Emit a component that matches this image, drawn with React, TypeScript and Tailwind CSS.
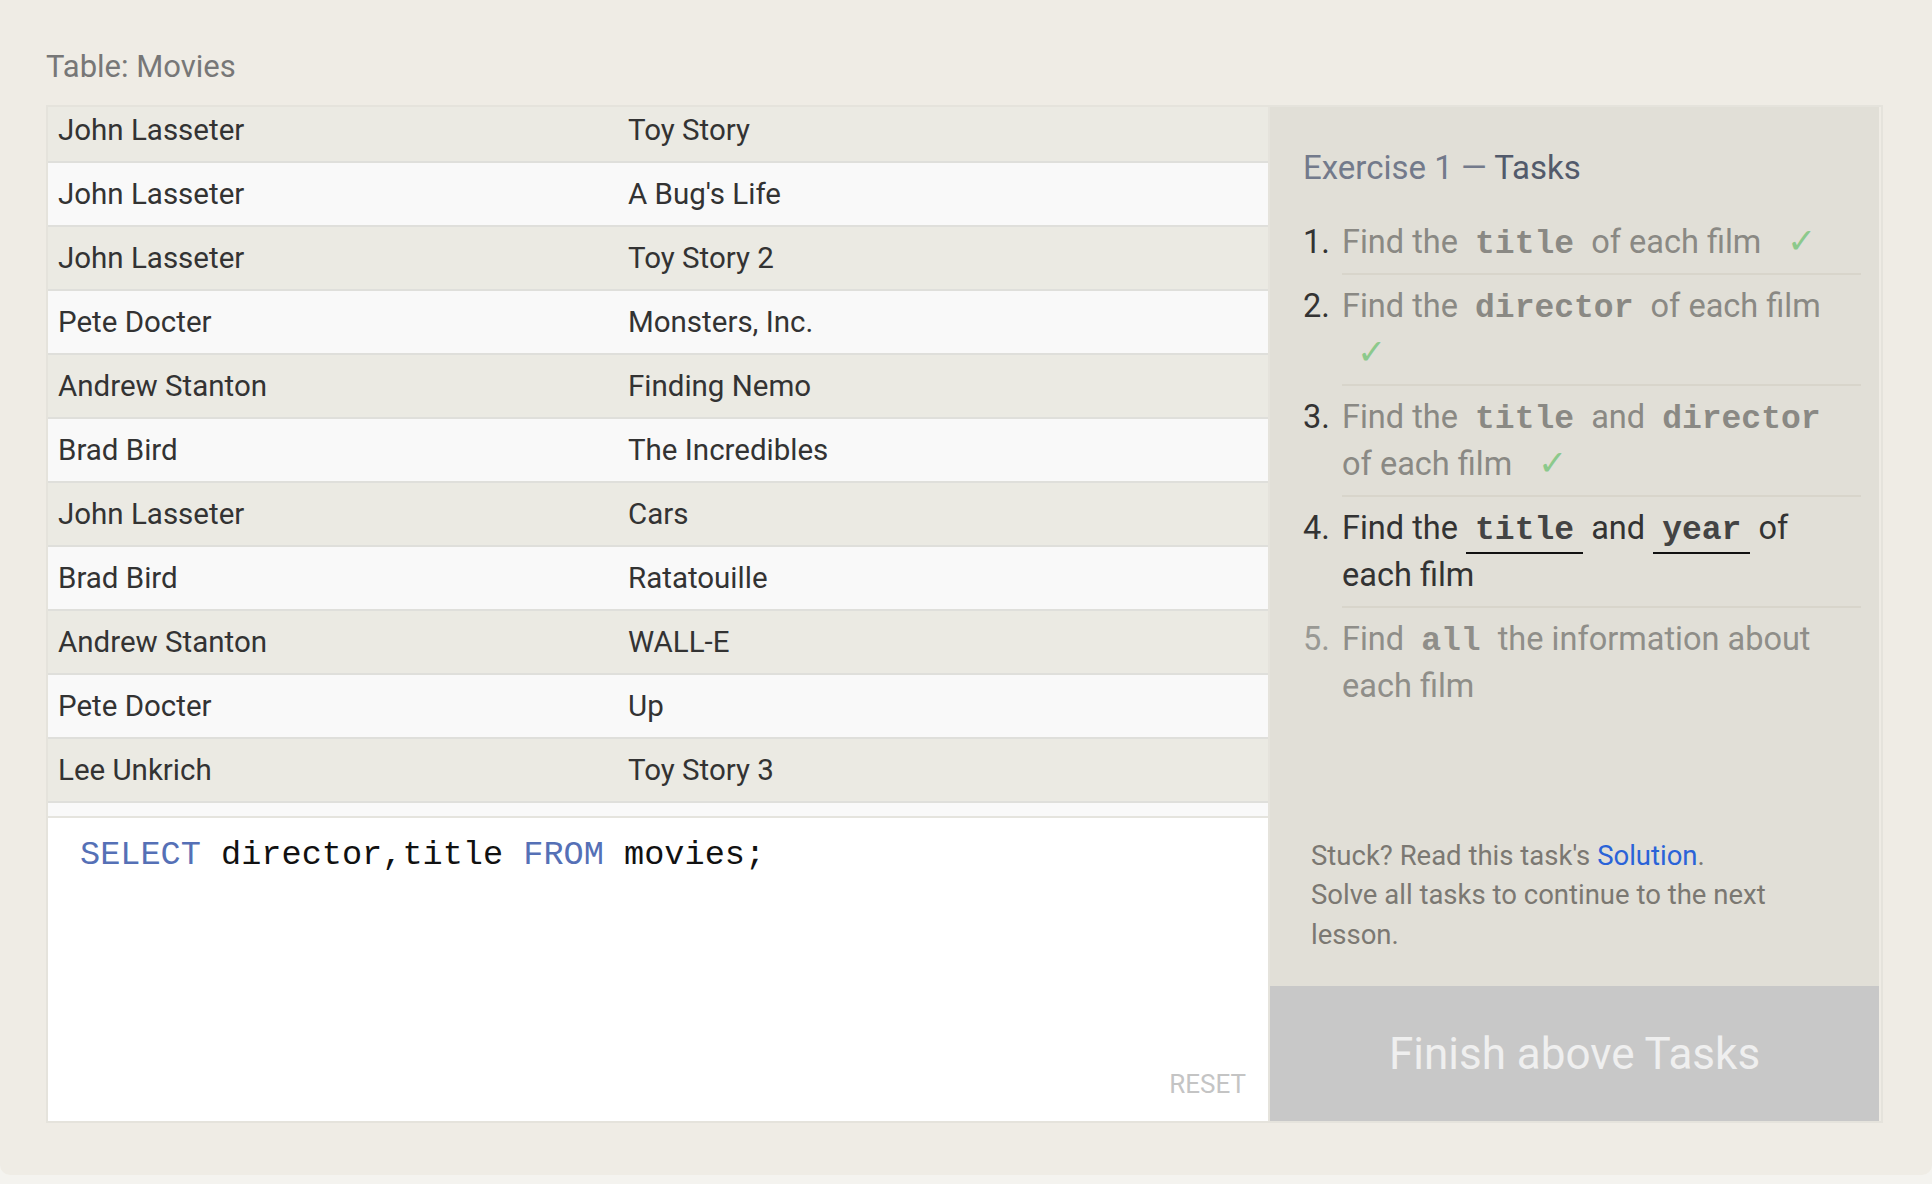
import React from "react";

const rows: [string, string][] = [
  ["John Lasseter", "Toy Story"],
  ["John Lasseter", "A Bug's Life"],
  ["John Lasseter", "Toy Story 2"],
  ["Pete Docter", "Monsters, Inc."],
  ["Andrew Stanton", "Finding Nemo"],
  ["Brad Bird", "The Incredibles"],
  ["John Lasseter", "Cars"],
  ["Brad Bird", "Ratatouille"],
  ["Andrew Stanton", "WALL-E"],
  ["Pete Docter", "Up"],
  ["Lee Unkrich", "Toy Story 3"],
  ["", ""],
];

function Code({ children, active }: { children: React.ReactNode; active?: boolean }) {
  return (
    <span
      className={
        "font-['Liberation_Mono',monospace] font-bold text-[33px] leading-none px-[9px] pb-[3px] " +
        (active ? "text-[#444444] border-b-2 border-[#111111]" : "")
      }
    >
      {children}
    </span>
  );
}

function Check({ inline }: { inline?: boolean }) {
  return (
    <span
      className={
        "inline-block text-[#8cc98c] text-[35px] leading-none " + (inline ? "pl-[26px]" : "pl-[15px]")
      }
    >
      ✓
    </span>
  );
}

function Task({
  n,
  children,
  numClass,
  textClass,
  last,
}: {
  n: number;
  children: React.ReactNode;
  numClass: string;
  textClass: string;
  last?: boolean;
}) {
  return (
    <li className="flex">
      <span className={"w-[39px] shrink-0 pt-[8px] leading-[47px] " + numClass}>{n}.</span>
      <div
        className={
          "flex-1 pt-[8px] pb-[7px] leading-[47px] " +
          textClass +
          (last ? "" : " border-b-2 border-[#d8d5cb]")
        }
      >
        {children}
      </div>
    </li>
  );
}

export default function App() {
  return (
    <div className="min-h-[1184px] bg-[#f4f3ef]">
      <div className="h-[1175px] rounded-b-[10px] bg-[#efece5] pl-[46px] pr-[49px] pt-[47px] font-[Roboto,sans-serif]">
        <h2 className="text-[31px] leading-[40px] text-[#777777] mb-[18px]">Table: Movies</h2>
        <div className="flex h-[1018px] border-2 border-[#e5e3dc]">
          {/* Left column */}
          <div className="w-[1220px] flex flex-col">
            <div className="h-[709px] overflow-hidden bg-[#f9f9f9]">
              <div className="-mt-[8px]">
                {rows.map((r, i) => (
                  <div
                    key={i}
                    className={
                      "flex h-[64px] items-center border-b-2 border-[#dfdfdb] text-[29.5px] text-[#333333] " +
                      (i % 2 === 0 ? "bg-[#ebeae3]" : "bg-[#f9f9f9]")
                    }
                  >
                    <div className="w-[580px] pl-[10px]">{r[0]}</div>
                    <div className="flex-1">{r[1]}</div>
                  </div>
                ))}
              </div>
            </div>
            <div className="flex-1 flex flex-col border-t-2 border-[#e5e4de] bg-white">
              <div className="pl-[32px] pt-[17px] leading-[40px] text-[33.6px] font-['Liberation_Mono',monospace] text-[#111111] whitespace-pre">
                <span className="text-[#5570b6]">SELECT</span> director,title <span className="text-[#5570b6]">FROM</span> movies;
              </div>
              <div className="flex-1" />
              <div className="self-end pr-[22px] pb-[21px] leading-[32px] text-[26px] text-[#c4c4c4]">RESET</div>
            </div>
          </div>

          {/* Right panel */}
          <div className="w-[611px] border-l-2 border-[#e5e3dc] flex flex-col bg-[#e1dfd7]">
            <div className="flex-1 flex flex-col justify-between pt-[41px]">
              <div>
                <h3 className="pl-[33px] text-[33px] leading-[40px] mb-[23px]">
                  <span className="text-[#737a8b]">Exercise 1 — </span>
                  <span className="text-[#525a6b]">Tasks</span>
                </h3>
                <ol className="pl-[33px] pr-[18px] text-[32.5px]">
                  <Task n={1} numClass="text-[#333333]" textClass="text-[#8a8984]">
                    Find the <Code>title</Code> of each film
                    <Check inline />
                  </Task>
                  <Task n={2} numClass="text-[#333333]" textClass="text-[#8a8984]">
                    Find the <Code>director</Code> of each film
                    <br />
                    <Check />
                  </Task>
                  <Task n={3} numClass="text-[#333333]" textClass="text-[#8a8984]">
                    Find the <Code>title</Code> and <Code>director</Code>
                    <br />
                    of each film
                    <Check inline />
                  </Task>
                  <Task n={4} numClass="text-[#333333]" textClass="text-[#333333]">
                    Find the <Code active>title</Code> and <Code active>year</Code> of
                    <br />
                    each film
                  </Task>
                  <Task n={5} numClass="text-[#999994]" textClass="text-[#8f8e89]" last>
                    Find <Code>all</Code> the information about
                    <br />
                    each film
                  </Task>
                </ol>
              </div>
              <div className="pl-[41px] pr-[20px] pb-[32px] text-[27.5px] leading-[39.5px] text-[#7b7872]">
                Stuck? Read this task's <span className="text-[#2a63d8]">Solution</span>.
                <br />
                Solve all tasks to continue to the next
                <br />
                lesson.
              </div>
            </div>
            <div className="h-[135px] bg-[#c8c8c8] flex items-center justify-center text-[44px] text-[#efefef]">
              Finish above Tasks
            </div>
          </div>
        </div>
      </div>
    </div>
  );
}
